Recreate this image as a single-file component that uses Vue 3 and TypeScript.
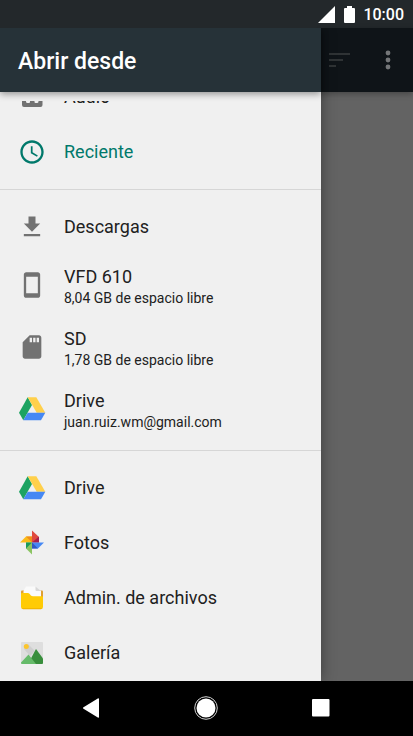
<script setup lang="ts">
type IconName =
  | 'audio' | 'recent' | 'download' | 'phone' | 'sd'
  | 'drive' | 'photos' | 'files' | 'gallery'

interface Entry {
  id: string
  label: string
  icon: IconName
  detail?: string
  active?: boolean
  clipped?: boolean
}

const groups: Entry[][] = [
  [
    { id: 'audio', label: 'Audio', icon: 'audio', clipped: true },
    { id: 'recent', label: 'Reciente', icon: 'recent', active: true },
  ],
  [
    { id: 'downloads', label: 'Descargas', icon: 'download' },
    { id: 'phone', label: 'VFD 610', icon: 'phone', detail: '8,04 GB de espacio libre' },
    { id: 'sd', label: 'SD', icon: 'sd', detail: '1,78 GB de espacio libre' },
    { id: 'drive-account', label: 'Drive', icon: 'drive', detail: 'juan.ruiz.wm@gmail.com' },
  ],
  [
    { id: 'drive', label: 'Drive', icon: 'drive' },
    { id: 'photos', label: 'Fotos', icon: 'photos' },
    { id: 'files', label: 'Admin. de archivos', icon: 'files' },
    { id: 'gallery', label: 'Galería', icon: 'gallery' },
  ],
]
</script>

<template>
  <div class="screen">
    <header class="status">
      <svg class="signal" viewBox="0 0 17 17" aria-hidden="true"><path d="M17 0v17H0z" /></svg>
      <svg class="battery" viewBox="0 0 11 17" aria-hidden="true">
        <path d="M3 0h5v2h2a1 1 0 0 1 1 1v13a1 1 0 0 1-1 1H1a1 1 0 0 1-1-1V3a1 1 0 0 1 1-1h2z" />
      </svg>
      <time class="clock">10:00</time>
    </header>

    <main class="stage">
      <nav class="drawer">
        <h1 class="title">Abrir desde</h1>
        <div class="list">
          <ul v-for="(group, index) in groups" :key="index" class="group">
            <li v-for="entry in group" :key="entry.id" :class="{ clipped: entry.clipped }">
              <button
                type="button"
                class="row"
                :class="{ active: entry.active, tall: entry.detail }"
              >
                <svg v-if="entry.icon === 'audio'" class="icon" viewBox="0 0 28 28" aria-hidden="true">
                  <path fill="#727272" fill-rule="evenodd" d="M6 3h16.500a2 2 0 0 1 2 2v17a2 2 0 0 1-2 2H6a2 2 0 0 1-2-2V5a2 2 0 0 1 2-2zM8 11v7.500a1.500 1.500 0 0 0 1.500 1.500H11a1 1 0 0 0 1-1v-4h4.500v4a1 1 0 0 0 1 1H19a1.500 1.500 0 0 0 1.500-1.500V11A6.200 6.200 0 0 0 8 11z" />
                </svg>
                <svg v-else-if="entry.icon === 'recent'" class="icon" viewBox="0 0 24 24" aria-hidden="true">
                  <path fill="currentColor" d="M11.99 2C6.47 2 2 6.48 2 12s4.47 10 9.99 10C17.52 22 22 17.52 22 12S17.52 2 11.99 2zM12 20c-4.42 0-8-3.58-8-8s3.58-8 8-8 8 3.58 8 8-3.58 8-8 8zm.5-13H11v6l5.25 3.15.75-1.23-4.5-2.67z" />
                </svg>
                <svg v-else-if="entry.icon === 'download'" class="icon" viewBox="0 0 24 24" aria-hidden="true">
                  <path fill="#727272" d="M19 9h-4V3H9v6H5l7 7 7-7zM5 18v2h14v-2H5z" />
                </svg>
                <svg v-else-if="entry.icon === 'phone'" class="icon" viewBox="0 0 24 24" aria-hidden="true">
                  <path fill="#727272" d="M17 1H7c-1.1 0-2 .9-2 2v18c0 1.1.9 2 2 2h10c1.1 0 2-.9 2-2V3c0-1.1-.9-2-2-2zm0 18H7V5h10v14z" />
                </svg>
                <svg v-else-if="entry.icon === 'sd'" class="icon" viewBox="0 0 24 24" aria-hidden="true">
                  <path fill="#727272" d="M18 2h-8L4 8v12c0 1.100.9 2 2 2h12c1.100 0 2-.9 2-2V4c0-1.100-.9-2-2-2zm-6 6h-2V4h2v4zm3 0h-2V4h2v4zm3 0h-2V4h2v4z" />
                </svg>
                <svg v-else-if="entry.icon === 'drive'" class="icon" viewBox="0 0 28 28" aria-hidden="true">
                  <path fill="#1da362" d="M9.700 2.300 1 17.700l4.300 7.600L14 10z" />
                  <path fill="#ffd04b" d="M9.700 2.300h8.600l9 15.400h-8.600z" />
                  <path fill="#4688f4" d="m5.300 25.300 4.400-7.600h17.600L23 25.300z" />
                </svg>
                <svg v-else-if="entry.icon === 'photos'" class="icon" viewBox="0 0 28 28" aria-hidden="true">
                  <path fill="#e04a3f" d="M14 1.500l7 6.500v5.500h-7z" />
                  <path fill="#a61e4f" d="M14 13.500l7-6v6z" />
                  <path fill="#fbbc1a" d="M2 13.500l6-6h6v6z" />
                  <path fill="#f08c1c" d="M14 13.500l-6-6h6z" />
                  <path fill="#8bc462" d="M14 25.500l-6-6v-6h6z" />
                  <path fill="#1b9a59" d="M14 13.500l-6 6v-6z" />
                  <path fill="#4688f4" d="M26 13.500l-6 6h-6v-6z" />
                  <path fill="#3157c4" d="M14 13.500l6 6h-6z" />
                </svg>
                <svg v-else-if="entry.icon === 'files'" class="icon" viewBox="0 0 28 28" aria-hidden="true">
                  <path fill="#e0a030" d="M3 7.500a1 1 0 0 1 1-1h20a1 1 0 0 1 1 1V14H3z" />
                  <path fill="#fafafa" d="M5.500 7L8 2.500h9.500L23 7v8H5.500z" />
                  <path fill="#d8d8d8" d="M17.500 2.500L23 7h-4.500a1 1 0 0 1-1-1z" />
                  <path fill="#ffcb05" d="M3 10a1 1 0 0 1 1-1h6c2 0 2 3.200 5 3.200h9a1 1 0 0 1 1 1V23a2 2 0 0 1-2 2H5a2 2 0 0 1-2-2z" />
                  <path fill="#efb000" d="M3.500 24.200h21L23 25.200H5z" />
                </svg>
                <svg v-else class="icon" viewBox="0 0 28 28" aria-hidden="true">
                  <rect x="3" y="3" width="22" height="22" rx="1" fill="#dedede" />
                  <path fill="#cfcfcf" d="M10 5l7 7-5 5-6-7z" />
                  <circle cx="8.300" cy="7.500" r="2.500" fill="#fbc52d" />
                  <path fill="#388e3c" d="M18 10l7 9.500V24a1 1 0 0 1-1 1H10z" />
                  <path fill="#66bb6a" d="M10.500 15.500L18 25H4a1 1 0 0 1-1-1v-.5z" />
                </svg>
                <span class="text">
                  <span class="label">{{ entry.label }}</span>
                  <span v-if="entry.detail" class="detail">{{ entry.detail }}</span>
                </span>
              </button>
            </li>
          </ul>
        </div>
      </nav>

      <section class="behind">
        <div class="toolbar">
          <button type="button" class="tool" aria-label="Ordenar">
            <svg width="22" height="16" viewBox="0 0 22 16" aria-hidden="true">
              <path fill="#2f3335" d="M0 1h21v2H0zM0 7h14v2H0zM0 13h7v2H0z" />
            </svg>
          </button>
          <button type="button" class="tool" aria-label="Más opciones">
            <svg width="6" height="20" viewBox="0 0 6 20" aria-hidden="true">
              <g fill="#747678">
                <circle cx="3" cy="3" r="2.400" /><circle cx="3" cy="10" r="2.400" /><circle cx="3" cy="17" r="2.400" />
              </g>
            </svg>
          </button>
        </div>
      </section>
    </main>

    <footer class="system">
      <button type="button" aria-label="Atrás">
        <svg width="24" height="24" viewBox="0 0 24 24" aria-hidden="true">
          <path d="M20 3v18a.8.8 0 0 1-1.200.6L4.500 12.800a.9.9 0 0 1 0-1.600l14.300-8.800a.8.8 0 0 1 1.200.6z" />
        </svg>
      </button>
      <button type="button" aria-label="Inicio">
        <svg width="24" height="24" viewBox="0 0 24 24" aria-hidden="true">
          <circle cx="12" cy="12" r="9.500" />
          <circle class="ring" cx="12" cy="12" r="11.300" />
        </svg>
      </button>
      <button type="button" aria-label="Recientes">
        <svg width="24" height="24" viewBox="0 0 24 24" aria-hidden="true">
          <rect x="3" y="3" width="17.500" height="17.500" rx="1" />
        </svg>
      </button>
    </footer>
  </div>
</template>

<style>
body {
  margin: 0;
  background: #000;
}
</style>

<style scoped>
.screen {
  display: flex;
  flex-direction: column;
  min-height: 100vh;
  font-family: Roboto, "Noto Sans", sans-serif;
  color: #212121;
}

button {
  margin: 0;
  padding: 0;
  border: 0;
  background: none;
  color: inherit;
  font: inherit;
}

.status {
  display: flex;
  align-items: center;
  justify-content: flex-end;
  height: 28px;
  padding-right: 9px;
  background: #23282b;
  color: #fff;
  fill: #fff;
}

.signal {
  width: 17px;
  height: 17px;
  margin-right: 9px;
}

.battery {
  width: 11px;
  height: 17px;
  margin-right: 8px;
}

.clock {
  padding-top: 2px;
  font-size: 16px;
  font-weight: 500;
  line-height: 28px;
}

.stage {
  display: flex;
  flex: 1;
  background: #636363;
}

.drawer {
  position: relative;
  flex: 1;
  min-width: 0;
  background: #f0f0f0;
  box-shadow: 0 0 14px rgba(0, 0, 0, 0.4);
  clip-path: inset(0 -20px 0 0);
}

.title {
  position: relative;
  box-sizing: border-box;
  height: 64px;
  margin: 0;
  padding: 4px 0 0 18px;
  background: #263238;
  box-shadow: 0 2px 7px rgba(0, 0, 0, 0.4);
  color: #fff;
  font-size: 23px;
  font-weight: 500;
  line-height: 60px;
}

.list {
  padding-top: 9px;
}

.group {
  margin: 0;
  padding: 0;
  list-style: none;
}

.group + .group {
  margin-top: 10px;
  padding-top: 9px;
  border-top: 1px solid #d6d6d6;
}

.clipped {
  display: flex;
  align-items: flex-end;
  height: 23px;
  overflow: hidden;
}

.row {
  display: flex;
  align-items: center;
  gap: 18px;
  width: 100%;
  height: 55px;
  flex-shrink: 0;
  padding: 0 18px;
  text-align: left;
}

.row.tall {
  height: 62px;
}

.row.active {
  color: #00796b;
}

.icon {
  flex: none;
  width: 28px;
  height: 28px;
}

.text {
  display: flex;
  flex-direction: column;
  min-width: 0;
}

.tall .text {
  padding-top: 4px;
}

.label {
  font-size: 18px;
  line-height: 22px;
}

.detail {
  font-size: 14px;
  line-height: 20px;
}

.behind {
  width: 92px;
}

.toolbar {
  display: flex;
  align-items: center;
  justify-content: space-between;
  box-sizing: border-box;
  height: 64px;
  padding: 0 22px 0 8px;
  background: #0f1418;
  box-shadow: 0 2px 6px rgba(0, 0, 0, 0.3);
}

.tool {
  display: flex;
}

.system {
  position: relative;
  display: flex;
  box-sizing: border-box;
  height: 55px;
  padding: 0 35px 2px 33px;
  background: #000;
}

.system button {
  display: flex;
  flex: 1;
  align-items: center;
  justify-content: center;
  fill: #fff;
}

.ring {
  fill: none;
  stroke: #d0d0d0;
  stroke-width: 1;
}
</style>
